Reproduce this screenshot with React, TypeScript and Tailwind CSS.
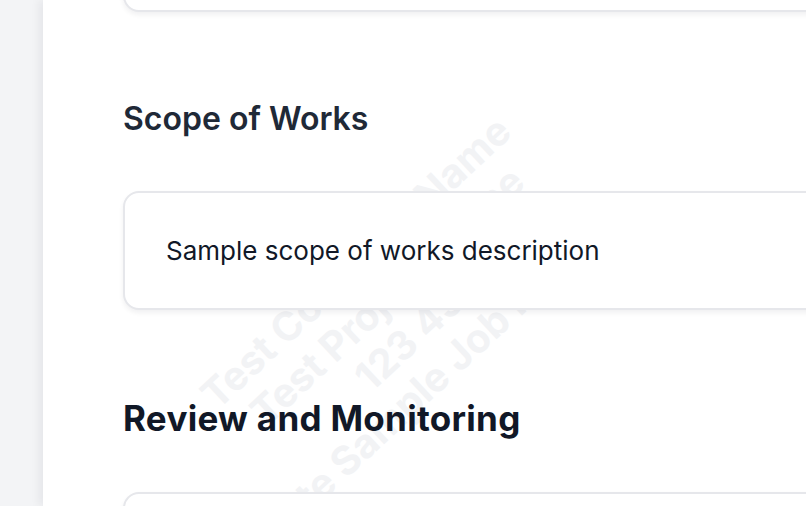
const watermark = ["Test Company Name", "Test Project Name", "123 456", "Site Sample Job Number"];

function Card({ children, className = "" }: { children?: React.ReactNode; className?: string }) {
  return (
    <div
      className={`relative rounded-[16px] border-2 border-[#e6e7eb] bg-white shadow-[0_3px_5px_rgba(17,24,39,0.06)] ${className}`}
    >
      {children}
    </div>
  );
}

export default function App() {
  return (
    <div className="flex h-screen w-full overflow-hidden bg-white font-['Inter','Liberation_Sans',sans-serif]">
      <aside className="w-[43px] shrink-0 bg-[#f3f4f6]" />
      <main className="relative flex-1 shadow-[-5px_0_8px_rgba(17,24,39,0.05)]">
        {/* watermark sits behind the cards */}
        <div className="pointer-events-none absolute left-[360px] top-[313px] w-0 h-0">
          <div className="absolute left-0 top-0 -translate-x-1/2 -translate-y-1/2 -rotate-[43deg] whitespace-nowrap text-center text-[40px] font-bold leading-[46px] text-[#f2f3f5]">
            {watermark.map((line) => (
              <div key={line}>{line}</div>
            ))}
          </div>
        </div>

        <div className="relative pl-[80px]">
          <Card className="-mt-[48px] h-[60px] mr-[-40px]" />

          <h2 className="mt-[87px] text-[32px] font-semibold leading-[40px] text-[#1f2937]">Scope of Works</h2>

          <Card className="mt-[52px] mr-[-40px] px-[41px] pt-[40px] pb-[39px]">
            <p className="text-[26px] leading-[36px] text-[#111827]">Sample scope of works description</p>
          </Card>

          <h2 className="mt-[88px] text-[35px] font-bold leading-[40px] tracking-[0.3px] text-[#111827]">Review and Monitoring</h2>

          <Card className="mt-[54px] mr-[-40px] h-[80px]" />
        </div>
      </main>
    </div>
  );
}
